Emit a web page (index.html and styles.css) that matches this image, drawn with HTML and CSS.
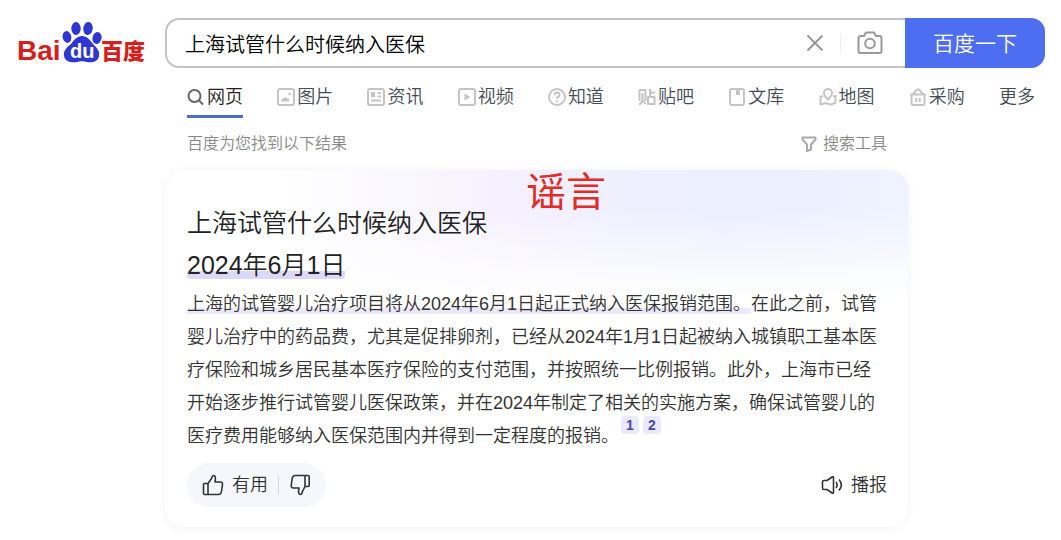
FILE: index.html
```html
<!DOCTYPE html>
<html lang="zh-CN">
  <head>
    <meta charset="utf-8" />
    <title>上海试管什么时候纳入医保_百度搜索</title>
    <link rel="stylesheet" href="styles.css" />
  </head>
  <body>
    <header class="header">
      <a class="logo" href="#" aria-label="百度">
        <svg width="128" height="44" viewBox="0 0 128 44">
          <g fill="#2f36d2">
            <ellipse cx="49" cy="16" rx="4.3" ry="6" transform="rotate(-12 49 16)" />
            <ellipse cx="58" cy="7.500" rx="4.700" ry="6.500" />
            <ellipse cx="70" cy="7.500" rx="4.700" ry="6.500" transform="rotate(8 70 7.500)" />
            <ellipse cx="79" cy="17" rx="4.500" ry="6" transform="rotate(14 79 17)" />
            <path d="M64 15c5 0 8 4 11 8 4 4 7 7 6 12-1 6-7 7-12 6-4-1-6-1-10 0-5 1-12 0-13-6-1-5 3-9 7-12 3-4 6-8 11-8z" />
          </g>
          <text class="logo-red" x="-1" y="39" font-size="28">Bai</text>
          <text class="logo-du" x="52" y="37" font-size="20">du</text>
          <text class="logo-cn" x="83" y="38" font-size="22">百度</text>
        </svg>
      </a>
      <form class="search">
        <div class="search-box">
          <input class="search-input" type="text" aria-label="搜索" value="上海试管什么时候纳入医保" />
          <button class="icon-btn" type="button" aria-label="清空">
            <svg width="18" height="18" viewBox="0 0 18 18"><path d="M1.500 1.500l15 15M16.500 1.500l-15 15" /></svg>
          </button>
          <span class="search-line"></span>
          <button class="icon-btn" type="button" aria-label="按图片搜索">
            <svg width="26" height="24" viewBox="0 0 26 24">
              <path d="M3.500 5H7l2-3.500h8L19 5h3.500a2 2 0 0 1 2 2v13a2 2 0 0 1-2 2h-19a2 2 0 0 1-2-2V7a2 2 0 0 1 2-2z" />
              <circle cx="13" cy="12.500" r="4.800" />
            </svg>
          </button>
        </div>
        <button class="search-btn" type="submit">百度一下</button>
      </form>
    </header>

    <main class="main">
      <nav class="tabs">
        <a class="tab active" href="#">
          <svg width="18" height="18" viewBox="0 0 18 18"><circle cx="7.500" cy="8" r="6" /><path d="M12 12.500l4 4" /></svg>网页
        </a>
        <a class="tab" href="#">
          <svg width="18" height="18" viewBox="0 0 18 18"><rect x="1" y="1" width="16" height="16" rx="2" /><circle class="solid" cx="12.500" cy="6" r="1.300" /><path class="solid" d="M4 13.500c-.5-2 1-3 2.500-3 1-2 3-1.500 3.500 0 2 0 2.500 1.500 2 3z" /></svg>图片
        </a>
        <a class="tab" href="#">
          <svg width="18" height="18" viewBox="0 0 18 18"><rect x="1" y="1" width="16" height="16" rx="2" /><path class="solid" d="M4 4h4v5H4z" /><path d="M10.500 5H14M10.500 8.500H14M4 12.500h10" /></svg>资讯
        </a>
        <a class="tab" href="#">
          <svg width="18" height="18" viewBox="0 0 18 18"><rect x="1" y="1" width="16" height="16" rx="2" /><path class="solid" d="M6.500 5.500l6 3.500-6 3.500z" /></svg>视频
        </a>
        <a class="tab" href="#">
          <svg width="18" height="18" viewBox="0 0 18 18"><circle cx="9" cy="9" r="8" /><path d="M6.500 7.200c0-3.500 5-3.500 5-.5 0 2-2.500 1.800-2.500 4M9 12.500v1.500" /></svg>知道
        </a>
        <a class="tab" href="#">
          <svg width="18" height="18" viewBox="0 0 18 18"><path d="M1.500 13V2h6v11M4.500 5v6c0 3-1.500 4.500-3.500 5.500M5.500 13l2 3M12 1v7M12 4.500h5M10 9h6.500v7H10z" /></svg>贴吧
        </a>
        <a class="tab" href="#">
          <svg width="18" height="18" viewBox="0 0 18 18"><rect x="2" y="1" width="14" height="16" rx="2" /><path class="solid" d="M8 1h4v6H8z" /></svg>文库
        </a>
        <a class="tab" href="#">
          <svg width="18" height="18" viewBox="0 0 18 18"><path d="M9 11.500C6.500 9 5 7.500 5 5a4 4 0 0 1 8 0c0 2.500-1.500 4-4 6.500zM4 8L1.500 9v7.500l5-1.500 5 1.500 5-1.500V8L14 8.500" /></svg>地图
        </a>
        <a class="tab" href="#">
          <svg width="18" height="18" viewBox="0 0 18 18"><path d="M1 6.500h16M2.500 7v8a2 2 0 0 0 2 2h9a2 2 0 0 0 2-2V7M4 6l4-4.500h2L14 6M7 10l.5 4M11 10l-.5 4" /></svg>采购
        </a>
        <a class="tab" href="#">更多</a>
      </nav>

      <div class="info">
        <span>百度为您找到以下结果</span>
        <button class="tools" type="button">
          <svg width="16" height="16" viewBox="0 0 16 16"><path d="M1.500 1.500h13v2L10 8.500v5L6 15V8.500L1.500 3.500z" /></svg>搜索工具
        </button>
      </div>

      <section class="card">
        <span class="stamp">谣言</span>
        <h1 class="title">上海试管什么时候纳入医保</h1>
        <p class="answer"><mark class="mark-date">2024年6月1日</mark></p>
        <p class="text"><mark class="mark-text">上海的试管婴儿治疗项目将从2024年6月1日起正式纳入医保报销范围。</mark>在此之前，试管婴儿治疗中的药品费，尤其是促排卵剂，已经从2024年1月1日起被纳入城镇职工基本医疗保险和城乡居民基本医疗保险的支付范围，并按照统一比例报销。此外，上海市已经开始逐步推行试管婴儿医保政策，并在2024年制定了相关的实施方案，确保试管婴儿的医疗费用能够纳入医保范围内并得到一定程度的报销。<span class="refs"><a class="ref" href="#">1</a><a class="ref" href="#">2</a></span></p>
        <div class="actions">
          <div class="vote">
            <button class="action" type="button">
              <svg width="22" height="22" viewBox="0 0 22 22"><path d="M6 9.500l3.500-5c.5-1 .5-3 2-3 2 0 2.300 2 1.500 6.500h5.500c1.500 0 2.200 1 2 2.500l-1 7c-.3 2-1.300 3-3 3H2.500c-.7 0-1-.3-1-1v-9c0-.7.3-1 1-1zM6 9.500v11" /></svg>有用
            </button>
            <span class="vote-line"></span>
            <button class="action" type="button" aria-label="没用">
              <svg width="22" height="22" viewBox="0 0 22 22"><path d="M16 12.500l-2.500 5c-.5 1-.5 3-2 3-2 0-2.500-2-1.500-6.500H4.500c-1.500 0-2.500-1-2.300-2.500l1-7c.3-2 1.300-3 3-3h13c.7 0 1 .3 1 1v9c0 .7-.3 1-1 1zM16 12.500v-11" /></svg>
            </button>
          </div>
          <button class="action" type="button">
            <svg width="22" height="20" viewBox="0 0 22 20"><path d="M1.500 7c0-1 .5-1.500 1.500-1.500h3l5-3.500c1-.6 1.500-.3 1.500.7v14.600c0 1-.5 1.300-1.500.7l-5-3.500H3c-1 0-1.500-.5-1.500-1.500zM15 7c1.500 2 1.500 4 0 6M18 4.500c3 3.500 3 7.500 0 11" /></svg>播报
          </button>
        </div>
      </section>
    </main>
  </body>
</html>
```
FILE: styles.css
```css
* {
  box-sizing: border-box;
}
body {
  margin: 0;
  padding: 18px 16px 12px 18px;
  background: #fff;
  color: #222;
  font-family: "Liberation Sans", "Noto Sans CJK SC", sans-serif;
  font-size: 18px;
  font-weight: 350;
}
a {
  color: inherit;
  text-decoration: none;
}
button {
  padding: 0;
  border: none;
  background: none;
  color: inherit;
  font: inherit;
  cursor: pointer;
}
svg {
  flex: none;
  fill: none;
  stroke: currentColor;
  stroke-width: 2;
  stroke-linejoin: round;
}
.solid {
  fill: currentColor;
  stroke: none;
}

/* header */
.header {
  display: flex;
  gap: 19px;
}
.logo {
  padding-top: 3px;
}
.logo svg {
  display: block;
  overflow: visible;
  stroke: none;
}
.logo-red,
.logo-cn {
  fill: #d61f1d;
  font-weight: bold;
}
.logo-cn {
  font-family: "Noto Sans CJK SC", sans-serif;
  font-weight: 900;
}
.logo-du {
  fill: #fff;
  font-weight: bold;
}
.search {
  display: flex;
  flex: 1;
  height: 50px;
}
.search-box {
  display: flex;
  flex: 1;
  align-items: center;
  padding-right: 22px;
  border: 2px solid #c4c4c8;
  border-right: none;
  border-radius: 14px 0 0 14px;
}
.search-input {
  flex: 1;
  min-width: 0;
  padding: 0 0 0 18px;
  border: none;
  outline: none;
  background: none;
  color: #000;
  font: inherit;
  font-size: 20px;
}
.icon-btn {
  display: flex;
  color: #999;
}
.search-line {
  width: 1px;
  height: 20px;
  margin: 0 16px;
  background: #eee;
}
.search-btn {
  width: 140px;
  padding-bottom: 2px;
  border-radius: 0 14px 14px 0;
  background: #4e6ef2;
  color: #fff;
  font-size: 21px;
}

/* tabs */
.main {
  padding-left: 147px;
}
.tabs {
  display: flex;
  justify-content: space-between;
  padding: 13px 10px 0 22px;
}
.tab {
  display: flex;
  align-items: center;
  gap: 2px;
  height: 37px;
  padding-bottom: 5px;
  color: #444b55;
  line-height: 32px;
}
.tab svg {
  color: #c4c4c4;
}
.tab.active {
  padding-bottom: 2px;
  border-bottom: 3px solid #4e6ec8;
  color: #222;
}
.tab.active svg {
  color: #666;
}
.info {
  display: flex;
  justify-content: space-between;
  max-width: 743px;
  padding: 14px 21px 14px 22px;
  color: #888;
  font-size: 16px;
  line-height: 24px;
}
.tools {
  display: flex;
  align-items: center;
  gap: 6px;
}
.tools svg {
  color: #aaa;
}

/* answer card */
.card {
  position: relative;
  max-width: 743px;
  padding: 34px 21px 20px 22px;
  border-radius: 20px;
  background:
    linear-gradient(to bottom, rgba(255, 255, 255, 0) 40px, #fff 130px),
    linear-gradient(to right, #fff 15%, #f4f0ff 48%, #ebeffe 75%, #eff3ff);
  box-shadow: 0 1px 8px rgba(0, 0, 0, 0.06);
}
.stamp {
  position: absolute;
  top: -8px;
  left: 361px;
  color: #e02d28;
  font-size: 40px;
  font-weight: 400;
  line-height: 60px;
}
.title,
.answer {
  margin: 0;
  font-size: 25px;
  font-weight: inherit;
  line-height: 38px;
}
.answer {
  margin-top: 4px;
}
mark {
  color: inherit;
}
.mark-date {
  border-radius: 4px;
  background: linear-gradient(transparent 70%, #dcd8fa 70%);
}
.mark-text {
  background: linear-gradient(transparent 70%, #ebe8fd 70%);
}
.text {
  margin: 4px 0 0;
  color: #333;
  line-height: 33px;
}
.refs {
  display: inline-flex;
  gap: 4px;
  margin: -12px 0 0 2px;
  vertical-align: 12px;
}
.ref {
  width: 18px;
  border-radius: 4px;
  background: #ebe9fd;
  color: #4b46b0;
  font-size: 14px;
  font-weight: bold;
  line-height: 18px;
  text-align: center;
}
.actions {
  display: flex;
  align-items: center;
  justify-content: space-between;
  margin-top: 10px;
  color: #333;
}
.vote {
  display: flex;
  align-items: center;
  gap: 10px;
  height: 44px;
  padding: 0 15px;
  border-radius: 22px;
  background: #f5f7fc;
}
.vote-line {
  width: 1px;
  height: 18px;
  background: #d5d8e0;
}
.action {
  display: flex;
  align-items: center;
  gap: 8px;
  line-height: 24px;
}
.action svg {
  stroke-width: 1.600;
}
```
